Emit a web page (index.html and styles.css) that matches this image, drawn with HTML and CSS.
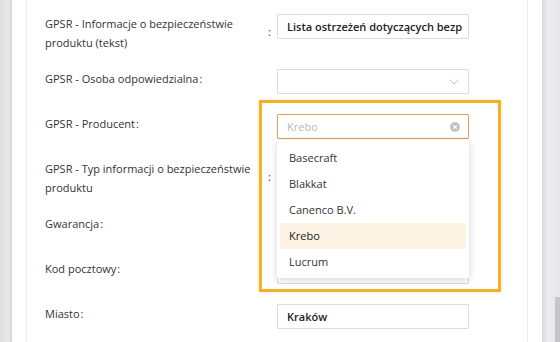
FILE: index.html
```html
<!DOCTYPE html>
<html>
<head>
    <title>GPSR</title>
    <link rel="stylesheet" href="styles.css">
</head>
<body>
    <div class="gutter"></div>

    <div class="page">
        <div class="card">

            <div class="row tall">
                <div class="label">GPSR - Informacje o bezpieczeństwie produktu (tekst)</div>
                <div class="colon">:</div>
                <div class="input"><span class="value">Lista ostrzeżeń dotyczących bezp</span></div>
            </div>

            <div class="row">
                <div class="label">GPSR - Osoba odpowiedzialna<span class="c">:</span></div>
                <div class="input select">
                    <svg class="chevron" width="10" height="6" viewBox="0 0 10 6"><path d="M0.5 0.5 L5 5 L9.5 0.5" fill="none" stroke="#c4c4c4" stroke-width="1"/></svg>
                </div>
            </div>

            <div class="row">
                <div class="label">GPSR - Producent<span class="c">:</span></div>
                <div class="field">
                    <div class="input focus">
                        <span class="placeholder">Krebo</span>
                        <svg class="clear" width="10" height="10" viewBox="0 0 10 10"><circle cx="5" cy="5" r="5" fill="#c2c2c2"/><path d="M3.3 3.3 L6.7 6.7 M6.7 3.3 L3.3 6.7" stroke="#fff" stroke-width="1.2"/></svg>
                    </div>
                    <div class="dropdown">
                        <div class="item">Basecraft</div>
                        <div class="item">Blakkat</div>
                        <div class="item">Canenco B.V.</div>
                        <div class="item active">Krebo</div>
                        <div class="item">Lucrum</div>
                    </div>
                </div>
            </div>

            <div class="row tall">
                <div class="label">GPSR - Typ informacji o bezpieczeństwie produktu</div>
                <div class="colon">:</div>
                <div class="input"></div>
            </div>

            <div class="row">
                <div class="label">Gwarancja<span class="c">:</span></div>
                <div class="input"></div>
            </div>

            <div class="row">
                <div class="label">Kod pocztowy<span class="c">:</span></div>
                <div class="input"></div>
            </div>

            <div class="row">
                <div class="label">Miasto<span class="c">:</span></div>
                <div class="input"><span class="value">Kraków</span></div>
            </div>

            <!-- zaznaczenie -->
            <div class="highlight"></div>
        </div>
    </div>

    <div class="scrollbar"><div class="thumb"></div></div>
</body>
</html>
```

FILE: styles.css
```css
* {
    box-sizing: border-box;
}

body {
    margin: 0;
    height: 342px;
    overflow: hidden;
    display: flex;
    font-family: "Open Sans", "Noto Sans", sans-serif;
    font-size: 11px;
    color: #333;
    background: #fff;
}

.gutter {
    width: 12px;
    background: linear-gradient(to right, #dedee0, #e9e9eb 70%, #d4d4d6);
}

.page {
    width: 530px;
    padding: 0 14px;
    background: #fff;
}

.card {
    position: relative;
    height: 100%;
    border-left: 1px solid #ececec;
    border-right: 1px solid #ececec;
    padding: 14px 0 0 18px;
}

.row {
    display: flex;
    align-items: flex-start;
    height: 25px;
    margin-bottom: 20px;
}

.row.tall {
    height: 35px;
}

.label {
    width: 220px;
    line-height: 19px;
}

.label .c {
    margin-left: 1px;
}

.colon {
    width: 12px;
    align-self: center;
    padding-left: 3px;
    line-height: 19px;
    margin-right: -12px;
}

.input,
.field {
    margin-left: 12px;
    width: 192px;
    height: 25px;
}

.input {
    border: 1px solid #dcdcdc;
    border-radius: 1px;
    display: flex;
    align-items: center;
    padding: 0 9px;
    background: #fff;
}

.field .input {
    margin-left: 0;
}

.value {
    font-weight: 600;
    font-size: 11px;
    color: #222;
    white-space: nowrap;
}

.select {
    justify-content: flex-end;
    padding-right: 9px;
}

.focus {
    border-color: #dfa256;
    justify-content: space-between;
    padding-right: 8px;
}

.placeholder {
    color: #b9b9b9;
}

.field {
    position: relative;
}

.dropdown {
    position: absolute;
    top: 26px;
    left: 0;
    width: 192px;
    padding: 5px 3px 3px;
    background: #fff;
    box-shadow: 0 2px 8px rgba(0, 0, 0, 0.16);
    z-index: 2;
}

.item {
    height: 26px;
    line-height: 26px;
    padding-left: 9px;
}

.item.active {
    background: #fdf3e4;
    color: #222;
}

.highlight {
    position: absolute;
    left: 232px;
    top: 100px;
    width: 242px;
    height: 192px;
    border: 3px solid #f5b023;
    box-shadow: 0 0 3px rgba(245, 176, 35, 0.3);
    z-index: 3;
    pointer-events: none;
}

.scrollbar {
    flex: 1;
    position: relative;
    background: linear-gradient(to right, #d9d9db, #ececee 30%, #e6e6e8);
}

.thumb {
    position: absolute;
    right: 0;
    top: 297px;
    width: 5px;
    height: 45px;
    background: #c6c6c6;
}
```
